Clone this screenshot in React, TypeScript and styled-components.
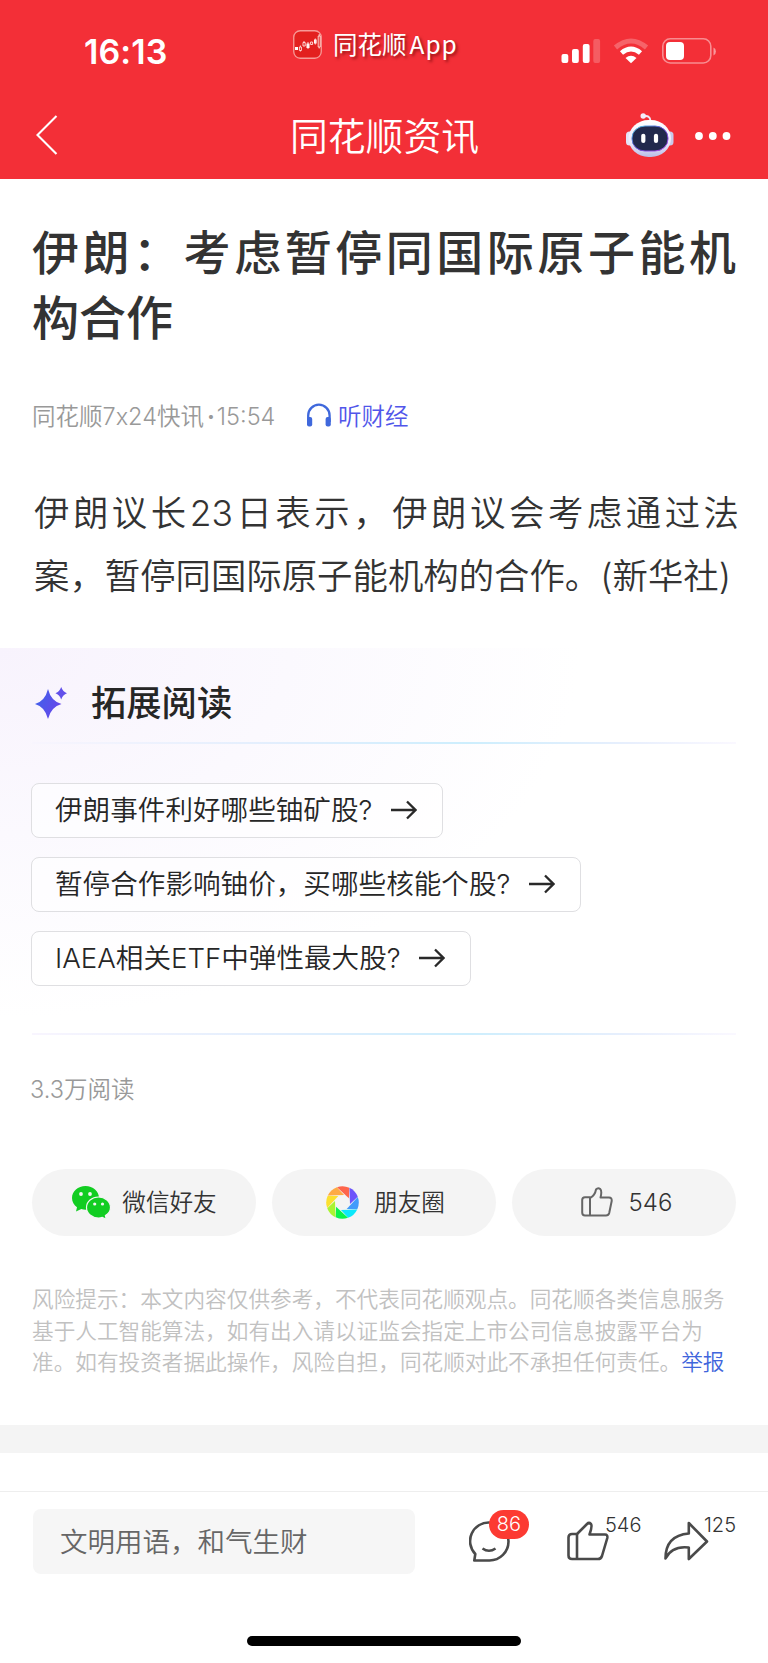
import React from 'react';
import styled, { createGlobalStyle } from 'styled-components';

const Global = createGlobalStyle`
  * { box-sizing: border-box; }
  body { margin: 0; background: #fff; }
  #root { font-family: Inter, 'Noto Sans CJK SC', sans-serif; }
`;

const Screen = styled.div`
  width: 768px; height: 1663px; display: flex; flex-direction: column;
  background: #fff; color: #333; overflow: hidden; white-space: nowrap;
`;
const Header = styled.header`
  height: 179px; background: #f32f37; color: #fff; flex: none;
`;
const StatusBar = styled.div`
  height: 92px; display: grid; grid-template-columns: 293px 1fr 207px; align-items: start;
`;
const Clock = styled.div`
  padding: 32px 0 0 84px; font-size: 34px; line-height: 40px; font-weight: 600; letter-spacing: 0.1px;
`;
const AppBadge = styled.div`
  display: flex; align-items: center; gap: 11px; padding-top: 29px; height: 60px;
  font-family: 'Noto Sans CJK SC', sans-serif;
  font-size: 24.5px; line-height: 30px; text-shadow: 2px 2px 3px rgba(90, 0, 0, 0.6);
  svg { flex: none; }
  span { padding-bottom: 2px; }
`;
const AppWord = styled.b`font-weight: 400; letter-spacing: 1px; margin-left: 3px;`;
const StatusIcons = styled.div`padding: 36px 0 0;`;
const NavBar = styled.div`
  height: 87px; display: grid; grid-template-columns: 290px 1fr 142px; align-items: center;
`;
const Back = styled.div`padding: 0 0 1px 35px; line-height: 0;`;
const NavTitle = styled.div`
  font: 350 37.8px/50px 'Noto Sans CJK SC', sans-serif; padding-bottom: 4px;
`;
const NavActions = styled.div`display: flex; gap: 21px; line-height: 0; padding-bottom: 2px;`;

const Article = styled.article`padding: 39px 30px 0 32px; height: 469px; flex: none;`;
const Headline = styled.h1`
  margin: 0; font: 500 47px/64.5px 'Noto Sans CJK SC', sans-serif; color: #333; width: 704px;
`;
const Meta = styled.div`
  display: flex; align-items: center; margin-top: 50px; height: 36px;
  font-size: 23.5px; font-weight: 350; color: #999;
`;
const Source = styled.span`width: 274px;`;
const Dot = styled.i`font-style: normal; font-weight: 700; margin: 0 2px 0 3px;`;
const Listen = styled.span`
  display: flex; align-items: center; gap: 6px; color: #5156ea;
`;
const Body = styled.p`
  margin: 49px 0 0 2px; width: 705px; font: 350 35.4px/63px Inter, 'Noto Sans CJK SC', sans-serif;
  color: #333;
`;
const Line = styled.span<{ $spread?: boolean }>`
  display: block; text-align-last: ${p => (p.$spread ? 'justify' : 'left')};
`;

const Extended = styled.section`
  height: 387px; flex: none; padding: 0 32px;
  background: radial-gradient(ellipse 580px 370px at 0 0, #f8f3fd 0%, #fbf9fe 50%, #ffffff 100%);
  display: flex; flex-direction: column; align-items: flex-start;
`;
const ExtendedHead = styled.div`
  height: 94px; padding: 11px 0 0 3px; display: flex; align-items: center; gap: 24px;
  font: 500 35.3px/50px 'Noto Sans CJK SC', sans-serif; color: #262626; width: 100%;
  svg { margin-top: 4px; }
`;
const Divider = styled.div`
  height: 2px; width: 100%; flex: none;
  background: linear-gradient(90deg, #f8f5fe 0%, #e2eefd 35%, #cdeefd 62%, #e8effd 85%, #faf8ff 100%);
`;
const Chips = styled.div`
  margin-left: -1px; padding-top: 39px; height: 289px; display: flex; flex-direction: column; gap: 19px; align-items: flex-start;
`;
const Chip = styled.div<{ $width: number }>`
  width: ${p => p.$width}px; height: 55px; border: 1.5px solid #dfdfe2; border-radius: 8px; background: rgba(255,255,255,.6);
  display: flex; align-items: center; justify-content: space-between; padding: 0 25px 1px 23px;
  font: 350 27.6px/40px Inter, 'Noto Sans CJK SC', sans-serif; color: #262626;
`;
const Reads = styled.div`
  padding: 38px 0 0 30px; height: 134px; font-size: 23.5px; line-height: 34px; font-weight: 350; color: #999;
`;
const Pills = styled.div`display: flex; gap: 16px; padding: 0 32px;`;
const Pill = styled.div<{ $gap: number; $shift?: number }>`
  width: 224px; height: 67px; border-radius: 34px; background: #f4f4f4; display: flex; align-items: center;
  justify-content: center; gap: ${p => p.$gap}px; font-size: 23.6px; font-weight: 350; color: #333;
  padding-left: ${p => p.$shift || 0}px;
  svg { margin-top: -1px; }
  span { padding-bottom: 3px; }
`;
const Likes = styled.b`font-weight: 350; font-size: 24px; padding-bottom: 1px;`;
const Disclaimer = styled.div`
  padding: 46px 0 0 32px; height: 189px; font: 350 21.65px/31.6px 'Noto Sans CJK SC', sans-serif; color: #c1c1c1;
  div { height: 31.6px; }
  a { color: #3f66dc; }
`;
const Band = styled.div`height: 28px; flex: none; background: #f4f4f4;`;
const Footer = styled.footer`
  margin-top: 38px; height: 145px; border-top: 1px solid #eee; padding: 17px 0 0 33px; display: flex; flex: none;
`;
const Input = styled.div`
  width: 382px; height: 65px; border-radius: 8px; background: #f6f6f6; padding-left: 27px;
  font: 350 27.5px/62px 'Noto Sans CJK SC', sans-serif; color: #666;
`;
const Action = styled.div<{ $left: number }>`
  position: relative; width: 44px; height: 65px; margin-left: ${p => p.$left}px; padding-top: 12px;
`;
const Count = styled.span<{ $x: number }>`
  position: absolute; left: ${p => p.$x}px; top: 2px; font-size: 20px; line-height: 28px; font-weight: 350; color: #333;
`;
const Badge = styled.span`
  position: absolute; left: 20px; top: 1px; width: 40px; height: 29px; border-radius: 15px; background: #fc3a32;
  color: #fff; font-size: 20px; line-height: 29px; text-align: center; font-weight: 350;
`;
const HomeBar = styled.div`width: 274px; height: 10px; border-radius: 5px; background: #000; margin-left: 247px; flex: none;`;

const AppLogo = () => (
  <svg width="29" height="29" viewBox="0 0 29 29">
    <rect x=".75" y=".75" width="27.5" height="27.5" rx="6.5" fill="#e3201f" stroke="#f79a97" strokeWidth="1.3" />
    <g fill="#fff">
      <rect x="2" y="17" width="3" height="3" /><rect x="13.5" y="13.5" width="3" height="4.5" /><rect x="21" y="9.5" width="2.6" height="4" />
    </g>
    <g fill="none" stroke="#ffe3e0" strokeWidth=".9">
      <path d="M6.4 17h2v3.5h-2zM10 12.5h2.2v3.5H10zM17.6 12h2v2.5h-2zM25.2 6h2v11h-2zM7.4 15.500v1.500M7.400 20.500v1M11 11v1.500M22.300 8.500v6M26.200 4v2M26.200 17v1.500M15 12v7" />
    </g>
  </svg>
);
const Status = () => (
  <svg width="160" height="30" viewBox="561 36 160 30">
    <g fill="#fff">
      <rect x="561.500" y="54" width="6.800" height="9" rx="2" /><rect x="572" y="49" width="6.800" height="14" rx="2" />
      <rect x="582.800" y="44" width="6.800" height="19" rx="2" /><rect x="593.300" y="39" width="6.800" height="24" rx="2" opacity=".22" />
    </g>
    <path d="M615.500 47.500Q631 34.500 646.500 47.500" fill="none" stroke="#fff" strokeWidth="5" opacity=".25" />
    <path d="M621.500 53Q631 45 640.500 53" fill="none" stroke="#fff" strokeWidth="4.800" />
    <path d="M625.500 58Q631 53.500 636.500 58L631 63.300Z" fill="#fff" />
    <rect x="662.800" y="38.800" width="48" height="24.200" rx="7.500" fill="none" stroke="#fff" strokeWidth="1.600" opacity=".45" />
    <path d="M713.500 47.500v8q2.400-1 2.400-4t-2.400-4z" fill="#fff" opacity=".5" />
    <rect x="666" y="42" width="18" height="18" rx="4" fill="#fff" />
  </svg>
);
const Robot = () => (
  <svg width="48" height="46" viewBox="626 111 48 46">
    <defs>
      <linearGradient id="shell" x1="0" y1="0" x2="0" y2="1"><stop offset="0" stopColor="#fff" /><stop offset=".6" stopColor="#eeeafb" /><stop offset="1" stopColor="#b9bde6" /></linearGradient>
      <linearGradient id="rim" x1="0" y1="0" x2="1" y2="1"><stop offset="0" stopColor="#54d9e8" /><stop offset=".5" stopColor="#5d43cf" /><stop offset="1" stopColor="#bb51ed" /></linearGradient>
    </defs>
    <path d="M643 115.500Q650 113.500 650.500 120" fill="none" stroke="#f0e9f8" strokeWidth="1.900" />
    <circle cx="643.200" cy="115" r="2.700" fill="#f4edfa" />
    <rect x="626" y="130.500" width="7" height="14" rx="3.500" fill="#e4e3f7" /><rect x="666.500" y="130.500" width="7" height="14" rx="3.500" fill="#c9caea" />
    <rect x="628.500" y="119" width="42.500" height="37" rx="20" ry="18.500" fill="url(#shell)" />
    <rect x="632" y="125" width="36" height="25" rx="13" ry="12" fill="#22294c" stroke="url(#rim)" strokeWidth="1" />
    <rect x="641.200" y="132.700" width="4.200" height="9.400" rx="2.100" fill="#fff" /><rect x="653.900" y="132.700" width="4.200" height="9.400" rx="2.100" fill="#fff" />
  </svg>
);
const Dots = () => (
  <svg width="36" height="46" viewBox="695 112 36 46"><g fill="#fff"><circle cx="699" cy="136" r="3.900" /><circle cx="712.800" cy="136" r="3.900" /><circle cx="726.500" cy="136" r="3.900" /></g></svg>
);
const Headphones = () => (
  <svg width="26" height="24" viewBox="0 0 26 24">
    <path d="M2.200 19V12.500a10.700 10.800 0 0 1 21.400 0V19" fill="none" stroke="#3f68dc" strokeWidth="2.300" />
    <rect x="1" y="14" width="5.200" height="9.500" rx="2" fill="#3f68dc" /><rect x="19.600" y="14" width="5.200" height="9.500" rx="2" fill="#3f68dc" />
  </svg>
);
const Sparkle = () => (
  <svg width="32" height="32" viewBox="0 0 32 32">
    <defs><linearGradient id="spark" x1="0" y1="0" x2="1" y2=".5"><stop offset="0" stopColor="#3b65eb" /><stop offset="1" stopColor="#6747ea" /></linearGradient></defs>
    <path d="M13 2Q16 14.200 26.500 17Q16 19.800 13 32Q10 19.800 0 17Q10 14.200 13 2Z" fill="url(#spark)" />
    <path d="M26.200 0Q27.900 4.900 32 6.200Q27.900 7.500 26.200 12.500Q24.500 7.500 20.500 6.200Q24.500 4.900 26.200 0Z" fill="#6250ea" />
  </svg>
);
const Arrow = () => (
  <svg width="26" height="20" viewBox="0 0 26 20"><path d="M0 10H24.500M16 1.500L24.500 10L16 18.500" fill="none" stroke="#292929" strokeWidth="2.300" /></svg>
);
const WeChat = () => (
  <svg width="39" height="33" viewBox="0 0 39 33">
    <path d="M13.500 0C6 0 0 5 0 12c0 4 2 7 5 9.200L4 25.500l5.300-2.400c1.400.4 2.700.6 4.200.6C21 23.700 27 18.700 27 12S21 0 13.500 0Z" fill="#12cd22" />
    <path d="M26.500 11C20 11 14.500 15.500 14.500 21.500S20 32 26.500 32c1.400 0 2.600-.2 3.800-.6l4 2-.9-3.800c3-1.800 5.100-4.700 5.100-8.100C38.500 15.500 33 11 26.500 11Z" fill="#12cd22" stroke="#f4f4f4" strokeWidth="1.200" />
    <g fill="#f4f4f4"><circle cx="9" cy="8" r="1.900" /><circle cx="18" cy="8" r="1.900" /><circle cx="22.700" cy="18" r="1.600" /><circle cx="30.500" cy="18" r="1.600" /></g>
  </svg>
);
const petals = ['#fe654b', '#6c54fb', '#409bfb', '#0be8fa', '#09f34c', '#a9f432', '#fce02f', '#feaa45'];
const Moments = () => (
  <svg width="33" height="33" viewBox="-16.500 -16.500 33 33">
    {petals.map((c, i) => <path key={c} d="M-5.500 -15.300A16.300 16.300 0 0 1 6.800 -14.800L6.400 -4.200Z" transform={`rotate(${i * 45})`} fill={c} />)}
  </svg>
);
const PillThumb = () => (
  <svg width="32" height="30" viewBox="0 0 32 30" fill="none" stroke="#666" strokeWidth="2" strokeLinejoin="round">
    <path d="M9 10.200H4Q1.200 10.200 1.200 13V25.500Q1.200 28.500 4 28.500H25Q27.500 28.500 28.200 26L30.700 14Q31 10.500 28 10.500H19.500Q21.200 4 19.200 2Q17 .2 15 2.500Q14 8.500 9 11Z" /><path d="M9 10.500V28.500" />
  </svg>
);
const Comment = () => (
  <svg width="41" height="42" viewBox="0 0 41 42" fill="none" stroke="#4a4a4a" strokeWidth="2.600" strokeLinejoin="round">
    <path d="M20.500 1.500A18.600 18.600 0 0 0 6.300 33L5.300 39.500H20.500A19 19 0 1 0 20.500 1.500Z" /><path d="M13.500 27.500Q20 32 26.500 27.500" />
  </svg>
);
const Thumb = () => (
  <svg width="42" height="40" viewBox="0 0 42 40" fill="none" stroke="#4a4a4a" strokeWidth="2.600" strokeLinejoin="round">
    <path d="M10 13H5Q1.500 13 1.500 16.500V34.500Q1.500 38 5 38H31Q34 38 35 35L40.300 17Q40.800 13.500 38 13.500H22.500Q25.500 5 24 3Q22 1 20 3Z" /><path d="M10 13V38" />
  </svg>
);
const Share = () => (
  <svg width="45" height="40" viewBox="0 0 45 40" fill="none" stroke="#4a4a4a" strokeWidth="2.600" strokeLinejoin="round">
    <path d="M24.800 2L43 20.500L24.800 38V26.500Q8 24.500 1.500 37.500Q1.500 14.500 24.800 12.500Z" />
  </svg>
);

const questions = [
  { text: '伊朗事件利好哪些铀矿股?', width: 412 },
  { text: '暂停合作影响铀价，买哪些核能个股?', width: 550 },
  { text: 'IAEA相关ETF中弹性最大股?', width: 440 },
];

export default function App() {
  return (
    <Screen>
      <Global />
      <Header>
        <StatusBar>
          <Clock>16:13</Clock>
          <AppBadge><AppLogo /><span>同花顺<AppWord>App</AppWord></span></AppBadge>
          <StatusIcons><Status /></StatusIcons>
        </StatusBar>
        <NavBar>
          <Back><svg width="24" height="40" viewBox="0 0 24 40"><path d="M21.500 1L2.500 20L21.500 39" fill="none" stroke="#fff" strokeWidth="2.100" /></svg></Back>
          <NavTitle>同花顺资讯</NavTitle>
          <NavActions><Robot /><Dots /></NavActions>
        </NavBar>
      </Header>
      <Article>
        <Headline>
          <Line $spread>伊朗：考虑暂停同国际原子能机</Line>
          <Line>构合作</Line>
        </Headline>
        <Meta><Source>同花顺7x24快讯<Dot>·</Dot>15:54</Source><Listen><Headphones />听财经</Listen></Meta>
        <Body>
          <Line $spread>伊朗议长23日表示，伊朗议会考虑通过法</Line>
          <Line>案，暂停同国际原子能机构的合作。(新华社)</Line>
        </Body>
      </Article>
      <Extended>
        <ExtendedHead><Sparkle />拓展阅读</ExtendedHead>
        <Divider />
        <Chips>{questions.map(q => <Chip key={q.text} $width={q.width}>{q.text}<Arrow /></Chip>)}</Chips>
        <Divider />
      </Extended>
      <Reads>3.3万阅读</Reads>
      <Pills>
        <Pill $gap={11} $shift={1}><WeChat /><span>微信好友</span></Pill>
        <Pill $gap={15} $shift={3}><Moments /><span>朋友圈</span></Pill>
        <Pill $gap={16} $shift={5}><PillThumb /><Likes>546</Likes></Pill>
      </Pills>
      <Disclaimer>
        <div>风险提示：本文内容仅供参考，不代表同花顺观点。同花顺各类信息服务</div>
        <div>基于人工智能算法，如有出入请以证监会指定上市公司信息披露平台为</div>
        <div>准。如有投资者据此操作，风险自担，同花顺对此不承担任何责任。<a>举报</a></div>
      </Disclaimer>
      <Band />
      <Footer>
        <Input>文明用语，和气生财</Input>
        <Action $left={54}><Comment /><Badge>86</Badge></Action>
        <Action $left={54}><Thumb /><Count $x={38}>546</Count></Action>
        <Action $left={53}><Share /><Count $x={40}>125</Count></Action>
      </Footer>
      <HomeBar />
    </Screen>
  );
}
